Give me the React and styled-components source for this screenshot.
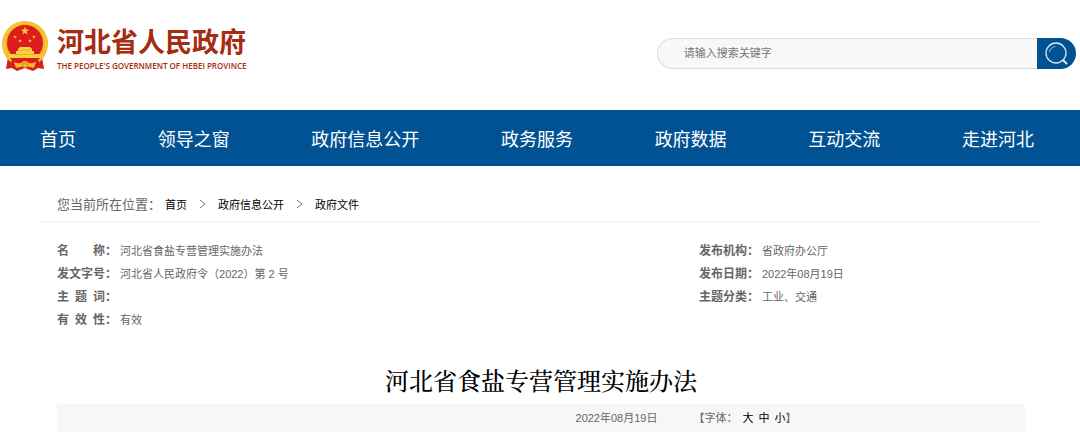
import styled, { createGlobalStyle } from "styled-components";

const GlobalStyle = createGlobalStyle`
  * {
    box-sizing: border-box;
  }
  body {
    margin: 0;
    background-color: #ffffff;
    color: #666666;
    font-family: "Liberation Sans", "Noto Sans CJK SC", sans-serif;
    font-size: 11px;
  }
`;

const Header = styled.header`
  display: flex;
  align-items: center;
  justify-content: space-between;
  height: 110px;
  padding: 0 4px 4px 1px;
`;

const Brand = styled.a`
  display: flex;
  align-items: center;
  gap: 8px;
  padding-bottom: 14px;
  color: #a62c12;
  text-decoration: none;
`;

const BrandName = styled.span`
  display: block;
  font-family: "Noto Sans CJK SC", sans-serif;
  font-size: 27px;
  font-weight: 700;
  line-height: 39px;
`;

const BrandSub = styled.span`
  display: block;
  font-family: "Open Sans", sans-serif;
  font-size: 8px;
  font-weight: 600;
  line-height: 11px;
  white-space: nowrap;
`;

const SearchForm = styled.form`
  display: flex;
  width: 39%;
  height: 31px;
`;

const SearchInput = styled.input`
  flex: 1;
  min-width: 0;
  padding: 0 26px;
  border: 1px solid #dcdcdc;
  border-right: none;
  border-radius: 16px 0 0 16px;
  background-color: #f8f8f8;
  color: #666666;
  font-family: inherit;
  font-size: 11px;
  outline: none;
  &::placeholder {
    color: #757575;
  }
`;

const SearchButton = styled.button`
  display: flex;
  align-items: center;
  justify-content: center;
  width: 39px;
  padding: 0;
  border: none;
  border-radius: 0 16px 16px 0;
  background-color: #005293;
  cursor: pointer;
`;

const Nav = styled.nav`
  display: flex;
  align-items: center;
  justify-content: space-between;
  height: 56px;
  padding: 4px 46px 0 40px;
  background-color: #005293;
`;

const NavLink = styled.a`
  color: #ffffff;
  font-size: 18px;
  line-height: 26px;
  text-decoration: none;
  white-space: nowrap;
`;

const Main = styled.main`
  padding: 22px 40px 0;
`;

const Breadcrumb = styled.nav`
  display: flex;
  align-items: center;
  height: 34px;
  padding: 0 17px 2px;
  border-bottom: 1px solid #f2f2f2;
`;

const BreadcrumbLabel = styled.span`
  margin-right: 4px;
  font-size: 13px;
`;

const BreadcrumbLink = styled.a`
  color: #000000;
  text-decoration: none;
`;

const Chevron = styled.svg`
  width: 7px;
  height: 10px;
  margin: 0 12px;
  fill: none;
  stroke: #777777;
`;

const Article = styled.article`
  padding: 0 15px 0 17px;
`;

const Meta = styled.div`
  display: grid;
  grid-template-columns: 66% 1fr;
  column-gap: 3px;
  padding-top: 18px;
`;

const MetaList = styled.dl`
  margin: 0;
`;

const MetaRow = styled.div`
  display: flex;
  gap: 3px;
  line-height: 23px;
`;

const MetaLabel = styled.dt`
  font-size: 12px;
  font-weight: 700;
  white-space: pre;
`;

const MetaValue = styled.dd`
  margin: 0;
`;

const Title = styled.h1`
  margin: 31px 0 7px;
  color: #000000;
  font-family: "Noto Serif CJK SC", "SimSun", "Noto Sans CJK SC", serif;
  font-size: 24px;
  font-weight: 500;
  line-height: 34px;
  text-align: center;
`;

const InfoBar = styled.div`
  display: flex;
  align-items: center;
  justify-content: center;
  gap: 36px;
  height: 28px;
  padding: 0 0 2px 290px;
  background-color: #f7f7f7;
`;

const FontSizes = styled.div`
  display: flex;
  align-items: center;
`;

const SizeButton = styled.button`
  margin-left: 5px;
  padding: 0;
  border: none;
  background: none;
  color: #000000;
  font-family: inherit;
  font-size: 11px;
  cursor: pointer;
`;

const navItems = [
  "首页",
  "领导之窗",
  "政府信息公开",
  "政务服务",
  "政府数据",
  "互动交流",
  "走进河北",
];

const leftMeta = [
  ["名\u3000\u3000称：", "河北省食盐专营管理实施办法"],
  ["发文字号：", "河北省人民政府令（2022）第 2 号"],
  ["主\u2002题\u2002词：", ""],
  ["有\u2002效\u2002性：", "有效"],
];

const rightMeta = [
  ["发布机构：", "省政府办公厅"],
  ["发布日期：", "2022年08月19日"],
  ["主题分类：", "工业、交通"],
];

const STAR = "M0-5 1.2-1.6 4.8-1.6 1.9.6 2.9 4 0 1.9-2.9 4-1.9.6-4.8-1.6-1.2-1.6Z";

const Emblem = () => (
  <svg width="48" height="52" viewBox="0 0 48 52" aria-hidden="true">
    <path d="M7 37 5 49l6-1 5 3 8-3 8 3 5-3 6 1-2-12Z" fill="#d8201c" />
    <circle cx="24" cy="24" r="23" fill="#f2b824" />
    <circle cx="24" cy="24" r="21" fill="none" stroke="#f7cb40" strokeWidth="2" strokeDasharray="3 1" />
    <circle cx="24" cy="23" r="18" fill="#df1c1c" />
    <path d={STAR} transform="translate(24 11) scale(.9)" fill="#f9c93a" />
    <path d={STAR} transform="translate(14 17) scale(.4)" fill="#f9c93a" />
    <path d={STAR} transform="translate(33 17) scale(.4)" fill="#f9c93a" />
    <path d={STAR} transform="translate(19 21) scale(.4)" fill="#f9c93a" />
    <path d={STAR} transform="translate(29 21) scale(.4)" fill="#f9c93a" />
    <path d="M17 29 19 27h10l2 2v2h2v3h7v4H8v-4h7v-3h2Z" fill="#f9d142" />
    <path d="M18 30h12M14 34.5h20" stroke="#f0a827" />
    <path d="M9 38h30l-3 4q-12 4-24 0Z" fill="#df1c1c" />
    <path d="M12 42q5 3 8 1 4-4 8 0 3 2 8-1v5q-5 2-9-1l-3-1-3 1q-4 3-9 1Z" fill="#f4bb28" />
    <path d="M11 41 14 48M37 41 34 48" stroke="#c9171a" strokeWidth="2" />
    <circle cx="24" cy="45" r="2.5" fill="#f2b824" stroke="#d98a1c" />
  </svg>
);

const SearchIcon = () => (
  <svg
    width="24"
    height="24"
    viewBox="0 0 24 24"
    fill="none"
    stroke="#d9e8f4"
    strokeLinecap="round"
    aria-hidden="true"
  >
    <circle cx="11" cy="12" r="10" strokeWidth="1.3" />
    <path d="M4.5 11A6.5 6.5 0 0 1 10 5.5" strokeWidth="1" opacity=".7" />
    <path d="m18.5 19.5 3 3" strokeWidth="2" />
  </svg>
);

const Separator = () => (
  <Chevron viewBox="0 0 7 10" aria-hidden="true">
    <path d="m1 1 5 4-5 4" />
  </Chevron>
);

const MetaColumn = ({ items }) => (
  <MetaList>
    {items.map(([label, value]) => (
      <MetaRow key={label}>
        <MetaLabel>{label}</MetaLabel>
        <MetaValue>{value}</MetaValue>
      </MetaRow>
    ))}
  </MetaList>
);

const App = () => {
  return (
    <>
      <GlobalStyle />
      <Header>
        <Brand href="#">
          <Emblem />
          <span>
            <BrandName>河北省人民政府</BrandName>
            <BrandSub>THE PEOPLE'S GOVERNMENT OF HEBEI PROVINCE</BrandSub>
          </span>
        </Brand>
        <SearchForm role="search">
          <SearchInput
            type="text"
            aria-label="请输入搜索关键字"
            placeholder="请输入搜索关键字"
          />
          <SearchButton type="button" aria-label="搜索">
            <SearchIcon />
          </SearchButton>
        </SearchForm>
      </Header>
      <Nav>
        {navItems.map((item) => (
          <NavLink key={item} href="#">
            {item}
          </NavLink>
        ))}
      </Nav>
      <Main>
        <Breadcrumb>
          <BreadcrumbLabel>您当前所在位置：</BreadcrumbLabel>
          <BreadcrumbLink href="#">首页</BreadcrumbLink>
          <Separator />
          <BreadcrumbLink href="#">政府信息公开</BreadcrumbLink>
          <Separator />
          <BreadcrumbLink href="#">政府文件</BreadcrumbLink>
        </Breadcrumb>
        <Article>
          <Meta>
            <MetaColumn items={leftMeta} />
            <MetaColumn items={rightMeta} />
          </Meta>
          <Title>河北省食盐专营管理实施办法</Title>
          <InfoBar>
            <time dateTime="2022-08-19">2022年08月19日</time>
            <FontSizes>
              <span>【字体：</span>
              <SizeButton type="button">大</SizeButton>
              <SizeButton type="button">中</SizeButton>
              <SizeButton type="button">小</SizeButton>
              <span>】</span>
            </FontSizes>
          </InfoBar>
        </Article>
      </Main>
    </>
  );
};

export default App;
